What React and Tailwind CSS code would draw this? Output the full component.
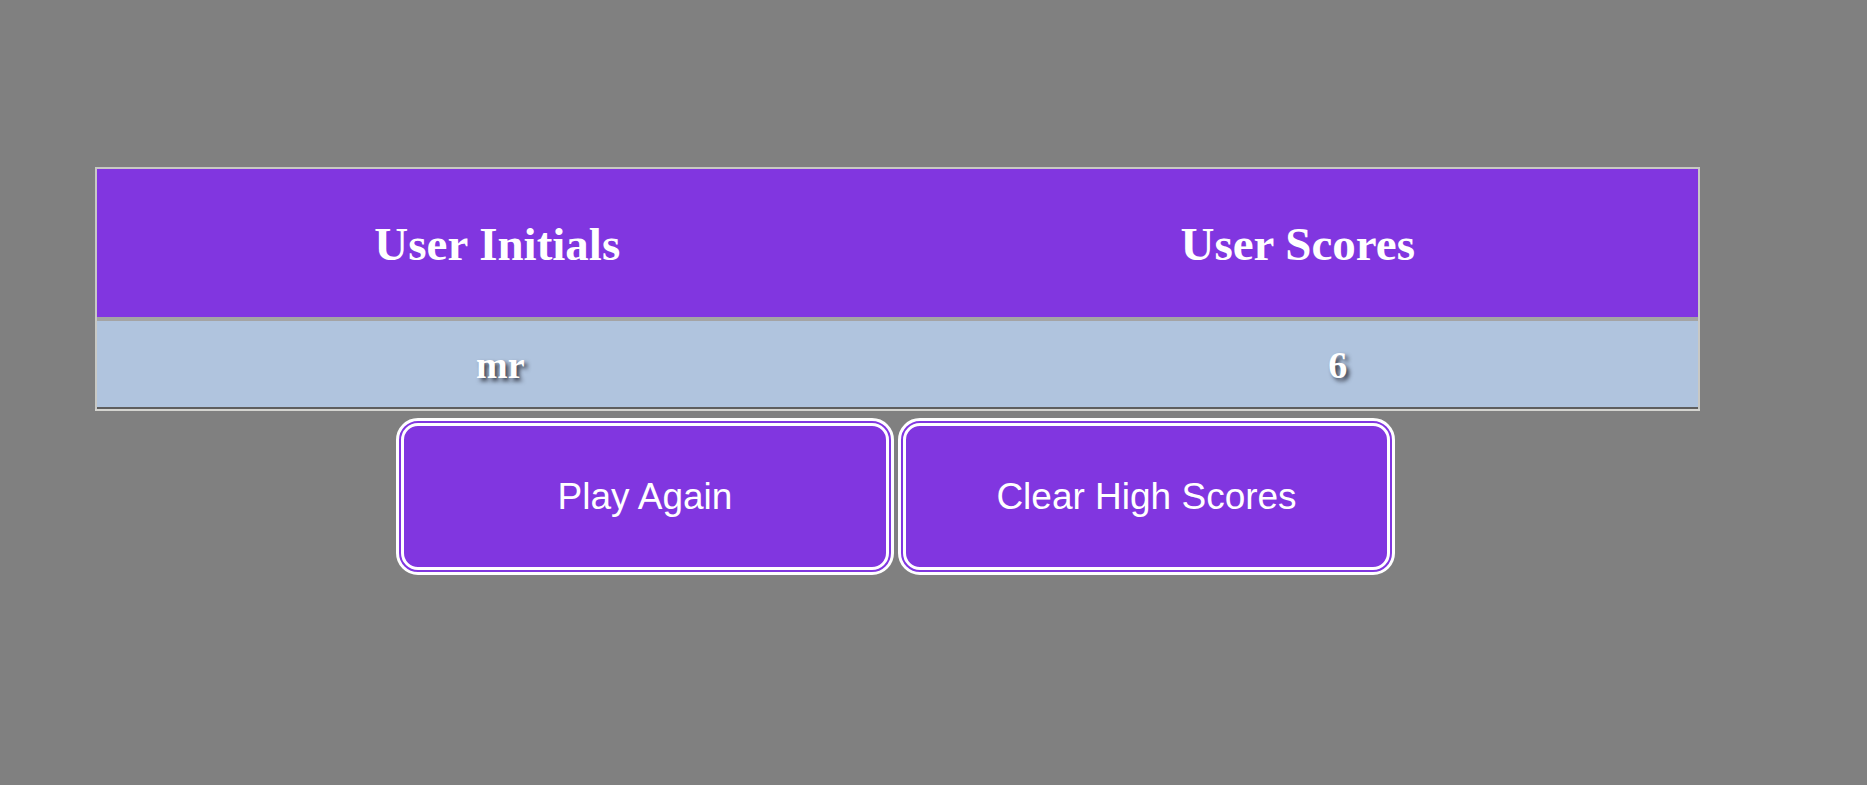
import React from 'react';

const scores = [{ initials: 'mr', score: 6 }];

const App = () => {
    return (
        <div className="min-h-screen bg-[#808080] pt-[167px] font-['Liberation_Serif',serif]">
            <div className="ml-[95px] w-[1605px]">
                {/* High score table */}
                <div className="border-2 border-[#c8c8c4] border-b-0">
                    <div className="grid grid-cols-2 items-center h-[148px] bg-[#8136e0] text-white text-[47px] font-bold">
                        <div className="text-center pt-[2px]">User Initials</div>
                        <div className="text-center pt-[2px]">User Scores</div>
                    </div>
                    <div className="h-[4px] bg-[#a4a4a4]" />
                    {scores.map((row, i) => (
                        <div key={i} className="grid grid-cols-2 items-center h-[86px] bg-[#b0c4de] text-white text-[38px] font-bold [text-shadow:3px_3px_4px_rgba(20,20,30,0.75)]">
                            <div className="text-center pl-[6px] pt-[2px]">{row.initials}</div>
                            <div className="text-center pl-[80px] pt-[2px]">{row.score}</div>
                        </div>
                    ))}
                    <div className="h-[2px] bg-[#5e5e5e]" />
                </div>
                <div className="h-[2px] bg-[#d4d4d0]" />

                {/* Actions */}
                <div className="flex justify-center gap-[4px] mt-[7px] pr-[4px]">
                    <button className="w-[498px] h-[157px] rounded-[22px] border-8 border-double border-white bg-[#8136e0] text-white text-[37px] font-['Liberation_Sans',Arial,sans-serif]">
                        Play Again
                    </button>
                    <button className="w-[497px] h-[157px] rounded-[22px] border-8 border-double border-white bg-[#8136e0] text-white text-[37px] font-['Liberation_Sans',Arial,sans-serif]">
                        Clear High Scores
                    </button>
                </div>
            </div>
        </div>
    );
};

export default App;
